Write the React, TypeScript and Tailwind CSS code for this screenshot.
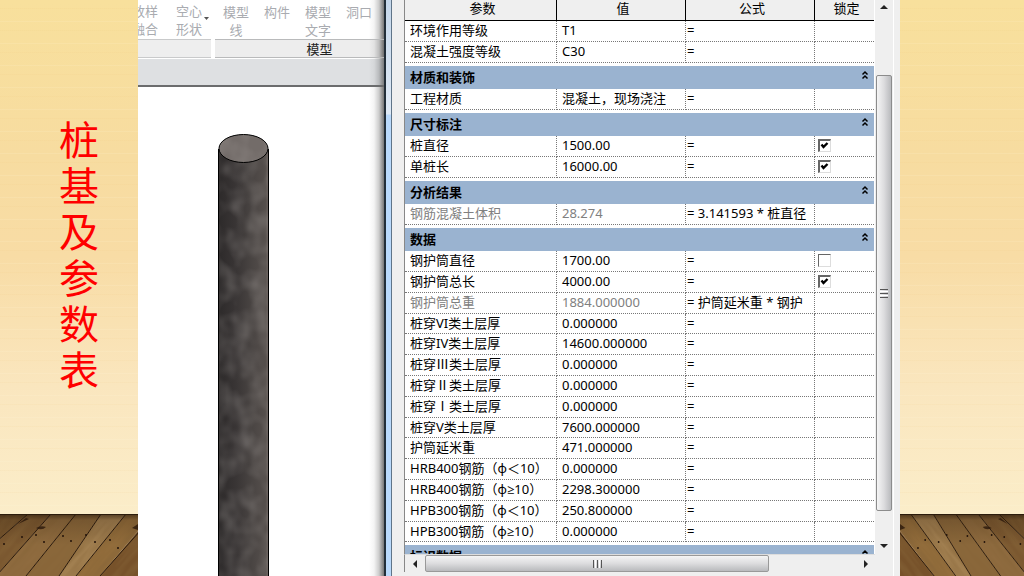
import { useState } from 'react'

interface Param {
  name: string
  value: string
  formula?: string
  lock?: boolean
  readOnly?: boolean
}

interface Group {
  title?: string
  params: Param[]
}

const GROUPS: Group[] = [
  {
    params: [
      { name: '环境作用等级', value: 'T1' },
      { name: '混凝土强度等级', value: 'C30' },
    ],
  },
  { title: '材质和装饰', params: [{ name: '工程材质', value: '混凝土，现场浇注' }] },
  {
    title: '尺寸标注',
    params: [
      { name: '桩直径', value: '1500.00', lock: true },
      { name: '单桩长', value: '16000.00', lock: true },
    ],
  },
  {
    title: '分析结果',
    params: [{ name: '钢筋混凝土体积', value: '28.274', formula: '3.141593 * 桩直径', readOnly: true }],
  },
  {
    title: '数据',
    params: [
      { name: '钢护筒直径', value: '1700.00', lock: false },
      { name: '钢护筒总长', value: '4000.00', lock: true },
      { name: '钢护筒总重', value: '1884.000000', formula: '护筒延米重 * 钢护', readOnly: true },
      { name: '桩穿VI类土层厚', value: '0.000000' },
      { name: '桩穿IV类土层厚', value: '14600.000000' },
      { name: '桩穿Ⅲ类土层厚', value: '0.000000' },
      { name: '桩穿Ⅱ类土层厚', value: '0.000000' },
      { name: '桩穿Ⅰ类土层厚', value: '0.000000' },
      { name: '桩穿V类土层厚', value: '7600.000000' },
      { name: '护筒延米重', value: '471.000000' },
      { name: 'HRB400钢筋（φ＜10）', value: '0.000000' },
      { name: 'HRB400钢筋（φ≥10）', value: '2298.300000' },
      { name: 'HPB300钢筋（φ＜10）', value: '250.800000' },
      { name: 'HPB300钢筋（φ≥10）', value: '0.000000' },
    ],
  },
  { title: '标识数据', params: [] },
]

const SEAMS = [
  'M-4 28 L28 0',
  'M-2 60 L51 0',
  'M26 62 L76 0',
  'M59 62 L101 0',
  'M76 62 L126 0',
  'M100 62 L140 17',
]
const KNOTS = [[4, 30], [22, 23], [36, 21], [44, 28], [63, 22], [71, 27], [86, 21], [95, 28], [110, 26], [118, 34]]

function Floor({ flip, id }: { flip?: boolean; id: string }) {
  return (
    <svg viewBox="0 0 138 62" preserveAspectRatio="none" aria-hidden="true"
      className={flip ? 'block h-[62px] w-full shrink-0 -scale-x-100' : 'block h-[62px] w-full shrink-0'}>
      <defs>
        <linearGradient id={`${id}-shade`} x1="0" y1="0" x2="0" y2="1">
          <stop offset="0" stopColor="#1d1006" stopOpacity="0.6" />
          <stop offset="0.1" stopColor="#2a1809" stopOpacity="0.2" />
          <stop offset="0.5" stopColor="#2a1809" stopOpacity="0" />
        </linearGradient>
        <filter id={`${id}-grain`} x="0" y="0" width="1" height="1">
          <feTurbulence type="fractalNoise" baseFrequency="0.02 0.16" numOctaves="3" seed="8" />
          <feColorMatrix values="0 0 0 0 0.24  0 0 0 0 0.13  0 0 0 0 0.04  1.3 0 0 0 -0.45" />
        </filter>
      </defs>
      <path d="M-4 0 H28 L-4 28Z" fill="#74532c" />
      <path d="M-4 28 L28 0 H51 L-2 60Z" fill="#7b5830" />
      <path d="M-2 60 L51 0 H76 L26 62 H-2Z" fill="#8f6b3f" />
      <path d="M26 62 L76 0 H101 L59 62Z" fill="#8a673a" />
      <path d="M59 62 L101 0 H126 L76 62Z" fill="#a17f50" />
      <path d="M76 62 L126 0 H138 V17 L100 62Z" fill="#936d3b" />
      <path d="M100 62 L138 17 V62Z" fill="#77522a" />
      <g transform="rotate(-50 69 31)">
        <rect x="-60" y="-60" width="280" height="200" filter={`url(#${id}-grain)`} />
      </g>
      {SEAMS.map(d => <path key={d} d={d} stroke="#2a190b" strokeWidth="1" fill="none" />)}
      {KNOTS.map(([x, y]) => <circle key={x} cx={x} cy={y} r="1" fill="#20120a" />)}
      <path d="M36 14 q5 -3 10 -1 q-4 4 -10 1z M18 10 l8 -6 l3 1z M132 14 l6 -4 v6z" fill="#2a180b" opacity="0.8" />
      <rect width="138" height="62" fill={`url(#${id}-shade)`} />
      <rect width="138" height="1" fill="#2c1c0c" />
    </svg>
  )
}

function Wall({ children }: { children?: React.ReactNode }) {
  return (
    <div className="flex-1 bg-[repeating-linear-gradient(to_bottom,transparent_0_8px,rgba(235,190,110,0.07)_8px_9px,transparent_9px_21px,rgba(255,250,225,0.12)_21px_22px),linear-gradient(to_bottom,#f8e09c_0%,#f7dca0_30%,#f8dca5_50%,#fae6be_75%,#fbedc9_100%)]">
      {children}
    </div>
  )
}

function Pile() {
  return (
    <svg viewBox="0 0 52 442" preserveAspectRatio="xMidYMin slice" role="img" aria-label="桩"
      className="block h-full w-[52px]">
      <defs>
        <linearGradient id="pile-side">
          <stop offset="0" stopColor="#2d2a2a" />
          <stop offset="0.35" stopColor="#393535" />
          <stop offset="0.7" stopColor="#4b4644" />
          <stop offset="0.94" stopColor="#554f4c" />
          <stop offset="1" stopColor="#6b615d" />
        </linearGradient>
        <filter id="pile-noise" x="0" y="0" width="1" height="1">
          <feTurbulence type="fractalNoise" baseFrequency="0.06 0.05" numOctaves="2" seed="4" />
          <feColorMatrix values="0 0 0 0 0.5  0 0 0 0 0.47  0 0 0 0 0.45  0.5 0 0 0 -0.17" />
        </filter>
        <clipPath id="pile-cap"><ellipse cx="25.5" cy="14.5" rx="24.5" ry="14" /></clipPath>
      </defs>
      <rect x="0.5" y="15" width="50" height="440" fill="url(#pile-side)" />
      <rect x="1" y="15" width="49" height="440" filter="url(#pile-noise)" />
      <path d="M0.5 15V450M50.5 15V450" stroke="#000" strokeWidth="1" />
      <ellipse cx="25.5" cy="14.5" rx="24.5" ry="14" fill="#736c69" />
      <g clipPath="url(#pile-cap)"><rect width="51" height="29" filter="url(#pile-noise)" /></g>
      <ellipse cx="25.5" cy="14.5" rx="24.5" ry="14" fill="none" stroke="#000" />
    </svg>
  )
}

function RibbonButton({ lines }: { lines: string[] }) {
  return (
    <button type="button" disabled className="block w-[26px] shrink-0 text-center text-[13px] leading-[18px] whitespace-nowrap text-[#a9abb0]">
      {lines.map(line => <span key={line} className="block">{line}</span>)}
    </button>
  )
}

function ModelView() {
  return (
    <main className="flex w-[246px] shrink-0 flex-col bg-white bg-[linear-gradient(to_left,#777,#ccc_5px,#f4f4f4_10px,transparent_15px)]">
      <div className="flex h-[59px] shrink-0 gap-1">
        <section className="flex w-[73px] flex-col overflow-hidden">
          <div className="flex h-[39px] items-start justify-end gap-[18px] pt-[2px]">
            <RibbonButton lines={['放样', '融合']} />
            <div className="flex shrink-0 items-start">
              <RibbonButton lines={['空心', '形状']} />
              <svg viewBox="0 0 9 6" className="mt-[14px] h-[6px] w-[9px]" aria-hidden="true">
                <path d="M2 1h5L4.500 4z" fill="#555" />
              </svg>
            </div>
          </div>
          <div className="h-[19px] border-y border-[#c9cacb] bg-[#eee]" />
        </section>
        <section className="flex flex-1 flex-col">
          <div className="flex h-[39px] items-start gap-[15px] pt-[3px] pl-2">
            <RibbonButton lines={['模型', '线']} />
            <RibbonButton lines={['构件']} />
            <RibbonButton lines={['模型', '文字']} />
            <RibbonButton lines={['洞口']} />
          </div>
          <h2 className="h-[19px] border-y border-[#b9babb] bg-black/7 pl-10 text-center text-[13px] leading-[18px] text-[#222]">模型</h2>
        </section>
      </div>
      <div className="h-7 shrink-0 border-b-2 border-[#6b6c6d] bg-[#7c858c]/25" />
      <div className="min-h-0 flex-1 pt-[47px] pl-20">
        <Pile />
      </div>
    </main>
  )
}

function LockBox({ name, initial }: { name: string; initial: boolean }) {
  const [locked, setLocked] = useState(initial)
  return (
    <label className="grid size-[13px]">
      <input type="checkbox" aria-label={`锁定 ${name}`} checked={locked} onChange={e => setLocked(e.target.checked)}
        className="peer col-start-1 row-start-1 size-[13px] appearance-none border border-t-[#666] border-r-[#ddd] border-b-[#ddd] border-l-[#666] bg-white checked:border-t-2 checked:border-l-2" />
      <svg viewBox="0 0 13 13" aria-hidden="true" className="pointer-events-none invisible col-start-1 row-start-1 size-[13px] peer-checked:visible">
        <path d="M3.500 5.500 L5.500 8 L9.500 4" fill="none" stroke="#000" strokeWidth="2.400" />
      </svg>
    </label>
  )
}

function CollapseIcon() {
  return (
    <svg viewBox="0 0 8 10" className="h-[10px] w-2" aria-hidden="true">
      <path d="M1.500 4.500 L4 2 L6.500 4.500 M1.500 8.500 L4 6 L6.500 8.500" fill="none" stroke="#000" strokeWidth="1.500" />
    </svg>
  )
}

const CELL = 'truncate border-b border-dotted border-[#777] p-0 pb-[2px]'

function ParamTable() {
  return (
    <table className="w-full table-fixed border-separate border-spacing-0 text-[13px] leading-[18px] text-black">
      <colgroup>
        <col className="w-[152px]" />
        <col className="w-[129px]" />
        <col className="w-[129px]" />
        <col />
      </colgroup>
      <thead>
        <tr className="h-[21px] bg-[#efefef] leading-4">
          <th scope="col" className="border-r border-b border-black p-0 pb-1 pl-1 font-normal">参数</th>
          <th scope="col" className="border-r border-b border-black p-0 pb-1 pl-1 font-normal">值</th>
          <th scope="col" className="border-r border-b border-black p-0 pb-1 pl-1 font-normal">公式</th>
          <th scope="col" className="border-b border-black p-0 pb-1 pl-1 font-normal">锁定</th>
        </tr>
      </thead>
      {GROUPS.map((g, i) => (
        <tbody key={i}>
          {g.title && (
            <tr className="h-[26px]">
              <th scope="rowgroup" colSpan={4} className="border-t-[3px] border-white bg-[#9ab3d0] bg-clip-padding p-0 pb-[2px] text-left">
                <div className="flex items-center justify-between pr-[5px] pl-[5px]">
                  <span>{g.title}</span>
                  <button type="button" aria-label={`折叠 ${g.title}`} className="pb-1"><CollapseIcon /></button>
                </div>
              </th>
            </tr>
          )}
          {g.params.map(p => (
            <tr key={p.name} className="h-[21px] nth-[5n]:h-5 leading-4">
              <td className={`${CELL} border-r pl-[5px] ${p.readOnly ? 'text-[#808080]' : ''}`}>{p.name}</td>
              <td className={`${CELL} border-r pl-[5px] ${p.readOnly ? 'text-[#808080]' : ''}`}>{p.value}</td>
              <td className={`${CELL} border-r pl-px`}>= {p.formula}</td>
              <td className={`${CELL} pl-[3px]`}>
                {p.lock !== undefined && <LockBox name={p.name} initial={p.lock} />}
              </td>
            </tr>
          ))}
        </tbody>
      ))}
    </table>
  )
}

function Arrow({ d }: { d: string }) {
  return (
    <svg viewBox="0 0 8 8" className="size-2" aria-hidden="true"><path d={d} fill="#222" /></svg>
  )
}

function ParamDialog() {
  return (
    <section className="flex min-w-0 flex-1 bg-[#efefef]">
      <div className="w-[2px] shrink-0 bg-[#222e38]" />
      <div className="w-[6px] shrink-0 border-r border-[#5f7488] bg-[linear-gradient(to_bottom,#c5d7ea_0,#dfeaf6_114px,#b9d9fb_115px)]" />
      <div className="flex min-w-0 flex-1 flex-col pb-1 pl-3">
        <div className="flex min-h-0 flex-1">
          <div className="min-w-0 flex-1 overflow-hidden border-l border-[#888] bg-white">
            <ParamTable />
          </div>
          <div className="flex w-[19px] shrink-0 flex-col border-l border-white bg-[#efefef] pl-px">
            <button type="button" aria-label="向上滚动" className="flex h-[14px] w-4 items-center justify-center"><Arrow d="M0 6 L4 2 L8 6z" /></button>
            <div className="flex min-h-0 flex-1 flex-col pt-[61px] pb-[27px]">
              <div className="flex w-4 flex-1 flex-col items-center justify-center gap-px rounded-xs border border-[#8c8c8c] bg-linear-to-r from-[#f5f5f5] via-[#dcdcde] to-[#b9babd]">
                <span className="h-px w-2 bg-[#555]" />
                <span className="h-px w-2 bg-white" />
                <span className="h-px w-2 bg-[#555]" />
                <span className="h-px w-2 bg-white" />
                <span className="h-px w-2 bg-[#555]" />
              </div>
            </div>
            <button type="button" aria-label="向下滚动" className="flex h-4 w-4 items-center justify-center"><Arrow d="M0 2 L4 6 L8 2z" /></button>
          </div>
        </div>
        <div className="mr-[18px] flex h-[18px] shrink-0 border-t border-l border-t-[#ddd] border-l-[#888] bg-[#efefef]">
          <button type="button" aria-label="向左滚动" className="flex w-5 items-center justify-center"><Arrow d="M6 0 L2 4 L6 8z" /></button>
          <div className="flex min-w-0 flex-1 pr-[88px]">
            <div className="flex flex-1 items-center justify-center gap-px rounded-xs border border-[#999] bg-linear-to-b from-[#f5f5f5] via-[#dcdcde] to-[#b9babd]">
              <span className="h-2 w-px bg-[#555]" />
              <span className="h-2 w-px bg-white" />
              <span className="h-2 w-px bg-[#555]" />
              <span className="h-2 w-px bg-white" />
              <span className="h-2 w-px bg-[#555]" />
            </div>
          </div>
          <button type="button" aria-label="向右滚动" className="flex w-[18px] items-center justify-center"><Arrow d="M2 0 L6 4 L2 8z" /></button>
        </div>
      </div>
      <div className="w-[7px] shrink-0 border-l border-white" />
    </section>
  )
}

export default function App() {
  return (
    <div className="flex h-screen overflow-hidden font-['Noto_Sans','Open_Sans','Noto_Sans_CJK_SC',sans-serif]">
      <div className="flex w-[138px] shrink-0 flex-col">
        <Wall>
          <h1 className="ml-[59px] w-10 pt-[117px] text-[40px] leading-[46px] break-all text-[#f00]">桩基及参数表</h1>
        </Wall>
        <Floor id="floor-left" />
      </div>
      <ModelView />
      <ParamDialog />
      <div className="flex w-[124px] shrink-0 flex-col">
        <Wall />
        <Floor flip id="floor-right" />
      </div>
    </div>
  )
}
